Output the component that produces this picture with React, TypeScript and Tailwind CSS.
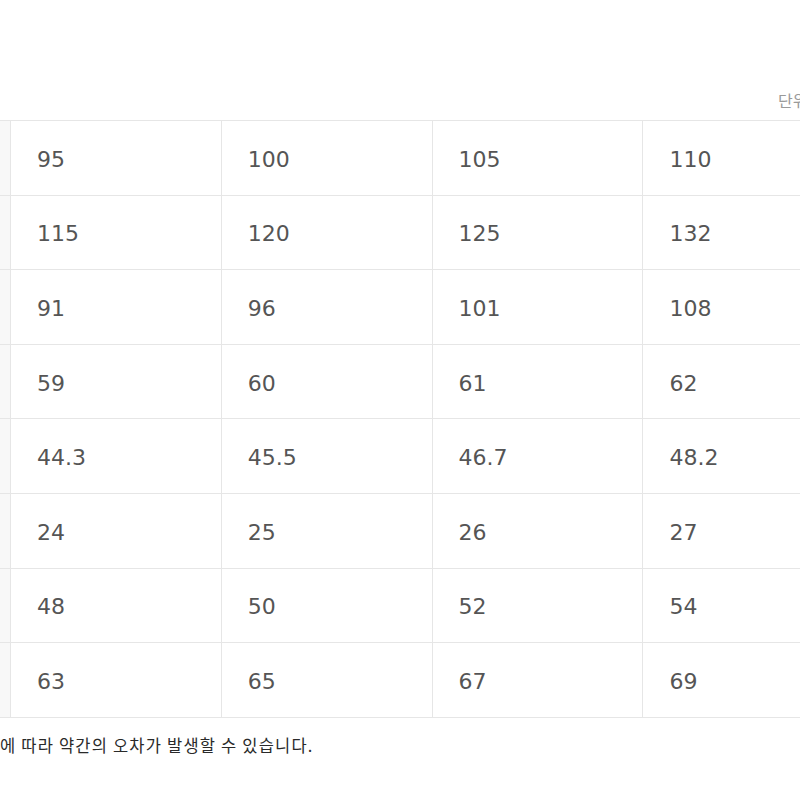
import React from "react";

const rows: string[][] = [
  ["95", "100", "105", "110"],
  ["115", "120", "125", "132"],
  ["91", "96", "101", "108"],
  ["59", "60", "61", "62"],
  ["44.3", "45.5", "46.7", "48.2"],
  ["24", "25", "26", "27"],
  ["48", "50", "52", "54"],
  ["63", "65", "67", "69"],
];

export default function App() {
  return (
    <div className="w-[800px] h-[800px] overflow-hidden bg-white" style={{ fontFamily: '"DejaVu Sans", "Noto Sans CJK KR", sans-serif' }}>
      <div className="h-[90px]" />
      <div className="flex h-[30px] items-start pl-[778px] whitespace-nowrap text-[16px] leading-[20px] text-[#9a9a9a]" style={{ fontFamily: '"Noto Sans CJK KR", sans-serif' }}>
        단위 : cm
      </div>
      <div className="w-[1000px] border-t border-[#e6e6e6]">
        {rows.map((r, i) => (
          <div key={i} className="flex h-[74.6px] border-b border-[#e6e6e6]">
            <div className="w-[11px] shrink-0 bg-[#f8f8f8] border-r border-[#e6e6e6]" />
            {r.map((v, j) => (
              <div key={j} className="w-[210.8px] shrink-0 flex items-center pl-[26px] pt-[3px] border-r border-[#e6e6e6] text-[22px] text-[#555555]">
                {v}
              </div>
            ))}
          </div>
        ))}
      </div>
      <div className="pt-[16px] whitespace-nowrap text-[16.5px] leading-[22px] tracking-[1.2px] text-[#2a2a2a]" style={{ fontFamily: '"Noto Sans CJK KR", sans-serif' }}>
        에 따라 약간의 오차가 발생할 수 있습니다.
      </div>
    </div>
  );
}
